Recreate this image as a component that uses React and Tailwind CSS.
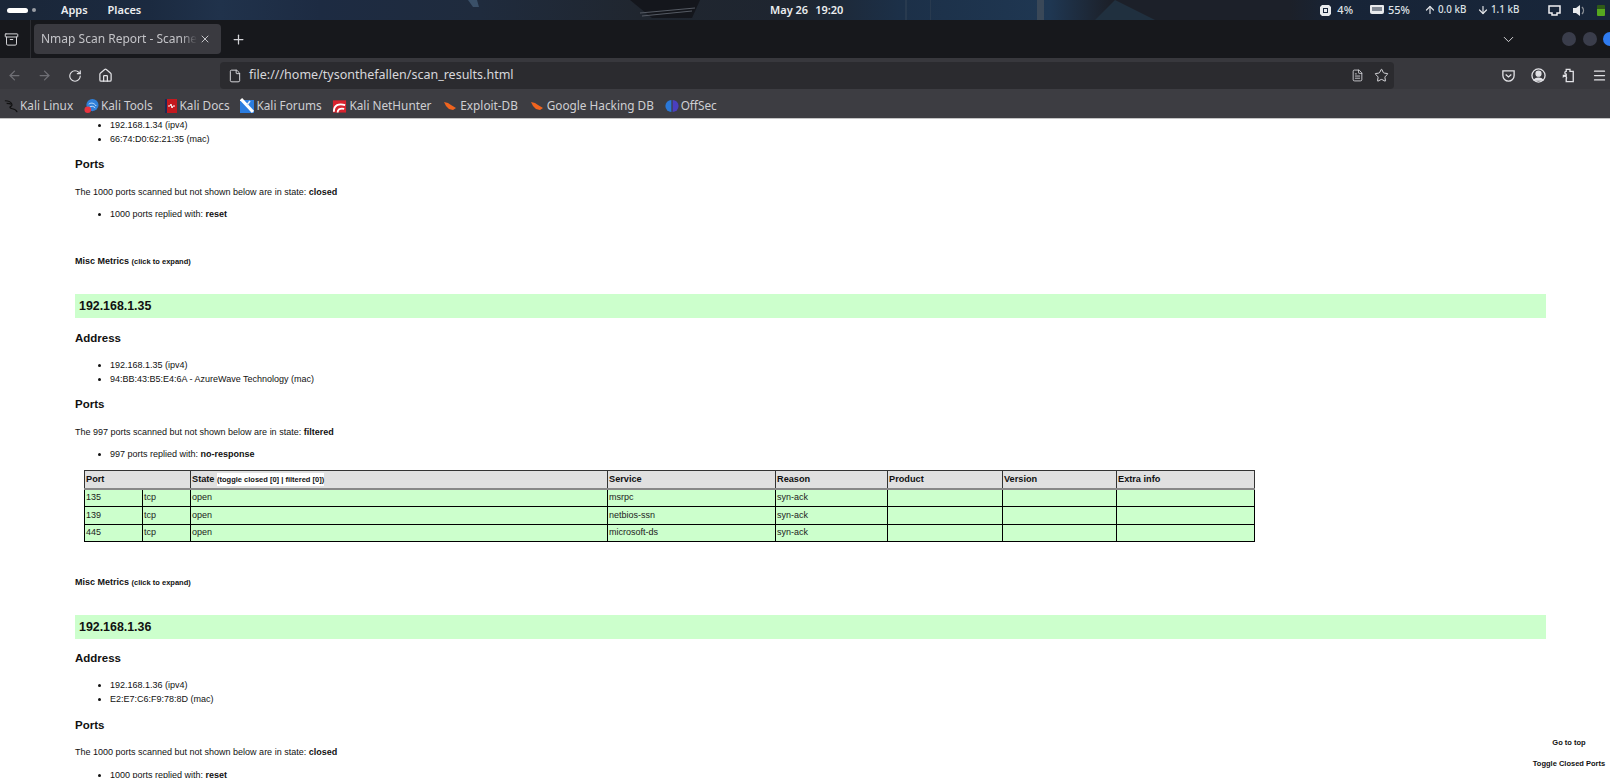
import { ArrowLeft, ArrowRight, RotateCw, Home, File, Star, ChevronDown, Plus, X, Menu, ArrowUp, ArrowDown, FileText, Archive } from "lucide-react";

const bookmarks = [
  { name: "Kali Linux", icon: "kali" },
  { name: "Kali Tools", icon: "tools" },
  { name: "Kali Docs", icon: "docs" },
  { name: "Kali Forums", icon: "forums" },
  { name: "Kali NetHunter", icon: "hunter" },
  { name: "Exploit-DB", icon: "exploit" },
  { name: "Google Hacking DB", icon: "exploit" },
  { name: "OffSec", icon: "offsec" },
];

function BookmarkIcon({ type }) {
  if (type === "kali")
    return (
      <svg width="14" height="16" viewBox="0 0 16 16" fill="none" stroke="#111" strokeWidth="1.4">
        <path d="M1 2c4 0 7 1 8 4s-3 2-2 4 6 0 8 5" />
        <path d="M3 5c2 0 4 0 5 1" />
      </svg>
    );
  if (type === "tools")
    return (
      <svg width="15" height="16" viewBox="0 0 16 16">
        <circle cx="9" cy="7" r="6.5" fill="#2f7fd8" />
        <path d="M5 6c3-2 6-1 8 2M6 9c2-1 4-1 6 1" stroke="#cfe6fb" fill="none" />
        <circle cx="4" cy="12" r="3.5" fill="#e8343f" />
      </svg>
    );
  if (type === "docs")
    return (
      <svg width="14" height="16" viewBox="0 0 14 16">
        <rect x="1" y="1" width="12" height="14" fill="#c4191f" />
        <rect x="1" y="1" width="2" height="14" fill="#1c2a55" />
        <path d="M4 8h2l1-2 1 4 1-2h2" stroke="#fff" fill="none" />
      </svg>
    );
  if (type === "forums")
    return (
      <svg width="14" height="16" viewBox="0 0 14 16">
        <rect x="0" y="2" width="14" height="13" fill="#2b7de0" />
        <path d="M1 1l12 13" stroke="#fff" strokeWidth="3" />
        <path d="M10 3L7 7" stroke="#dfeaf7" strokeWidth="1.5" />
      </svg>
    );
  if (type === "hunter")
    return (
      <svg width="15" height="16" viewBox="0 0 16 16">
        <rect x="1" y="2" width="14" height="13" fill="#d9232e" />
        <path d="M2 14c0-7 5-9 12-7M6 15c0-3 2-5 7-4" stroke="#fff" strokeWidth="2" fill="none" />
      </svg>
    );
  if (type === "exploit")
    return (
      <svg width="16" height="14" viewBox="0 0 14 14">
        <path d="M1 3l4 1 3 2 5 3-3 2-4-1-3-3z" fill="#f0641e" />
      </svg>
    );
  return (
    <svg width="14" height="14" viewBox="0 0 14 14">
      <path d="M6.4 1a6 6 0 0 0 0 12z" fill="#2a78d8" />
      <path d="M7.6 1a6 6 0 0 1 0 12z" fill="#4a3fc0" />
    </svg>
  );
}

function Addr({ lines }) {
  return (
    <ul className="list-disc pl-[35px] leading-[13.6px]">
      {lines.map((l) => (
        <li key={l}>{l}</li>
      ))}
    </ul>
  );
}

function Heading({ className, children }) {
  return <h3 className={`text-[11.5px] leading-[14px] font-bold ${className}`}>{children}</h3>;
}

function Misc({ className }) {
  return (
    <p className={`font-bold text-[9px] leading-[13px] ${className}`}>
      Misc Metrics <span className="text-[7.5px]">(click to expand)</span>
    </p>
  );
}

function HostBar({ ip, className }) {
  return (
    <h2 className={`h-[24px] bg-[#ccffcc] pl-[4px] text-[12.4px] font-bold leading-[24px] ${className}`}>{ip}</h2>
  );
}

const rows = [
  ["135", "tcp", "open", "msrpc", "syn-ack"],
  ["139", "tcp", "open", "netbios-ssn", "syn-ack"],
  ["445", "tcp", "open", "microsoft-ds", "syn-ack"],
];

function PortTable() {
  const th = "border border-[#333] pl-[1px] text-left font-bold align-middle";
  const td = "border border-black pl-[1px] text-left font-normal align-middle text-[#222]";
  return (
    <table className="ml-[9px] mt-[9px] w-[1170px] table-fixed border-collapse border border-[#444] text-[9px]">
      <colgroup>
        <col className="w-[58px]" />
        <col className="w-[48px]" />
        <col className="w-[417px]" />
        <col className="w-[168px]" />
        <col className="w-[112px]" />
        <col className="w-[115px]" />
        <col className="w-[114px]" />
        <col className="w-[138px]" />
      </colgroup>
      <thead>
        <tr className="h-[18px] border-b-2 border-b-[#888] bg-[#e0e0e0] text-[9.2px]">
          <th colSpan={2} className={th}>Port</th>
          <th className={th}>
            State{" "}
            <span className="bg-white py-[2px] text-[7.5px]">(toggle closed [0] | filtered [0])</span>
          </th>
          <th className={th}>Service</th>
          <th className={th}>Reason</th>
          <th className={th}>Product</th>
          <th className={th}>Version</th>
          <th className={th}>Extra info</th>
        </tr>
      </thead>
      <tbody>
        {rows.map((r) => (
          <tr key={r[0]} className="h-[17.6px] bg-[#ccffcc]">
            {r.map((c, i) => (
              <td key={i} className={td}>{c}</td>
            ))}
            <td className={td} />
            <td className={td} />
            <td className={td} />
          </tr>
        ))}
      </tbody>
    </table>
  );
}

export default function App() {
  return (
    <div className="relative flex h-[778px] w-[1610px] flex-col overflow-hidden bg-white">
      {/* top panel, wallpaper shows through */}
      <div className="relative flex h-[20px] shrink-0 items-center justify-between bg-[linear-gradient(to_right,#1a2638_0,#1b2a40_150px,#20324b_220px,#1d2b42_320px,#1f2b3d_480px,#20262f_640px,#1e2530_800px,#1c3048_900px,#1f3752_1050px,#1c2029_1110px,#1c2029_1290px,#172437_1340px,#18263a_1610px)] font-['Noto_Sans',sans-serif] text-[11px] font-semibold text-[#eceef0]">
        {/* wallpaper scraps */}
        <svg className="absolute left-0 top-0" width="1610" height="20" viewBox="0 0 1610 20" fill="none">
          <path d="M468 0h9l2 7h-6z" fill="#3a5068" />
          <path d="M630 0h70l-8 18h-40z" fill="#14161c" />
          <path d="M640 13l55-5M642 16l50-5" stroke="#555a63" />
          <path d="M1037 0h7v20h-7z" fill="#3a4858" />
          <path d="M905 0h2v20h-2zM930 0h1v20h-1z" fill="#283a4f" />
          <path d="M1115 0l40 20h-60z" fill="#20303f" />
        </svg>
        <div className="relative flex items-center">
          <span className="ml-[7px] h-[5px] w-[21px] rounded-full bg-white" />
          <span className="ml-[4px] h-[4px] w-[4px] rounded-full bg-[#9a9ea5]" />
          <span className="ml-[25px]">Apps</span>
          <span className="ml-[20px]">Places</span>
        </div>
        <div className="absolute left-[770px] top-0 flex h-[20px] items-center gap-[7px]">
          <span>May 26</span>
          <span>19:20</span>
        </div>
        <div className="relative flex items-center font-medium text-[#dfe2e6]">
          <svg width="13" height="13" viewBox="0 0 13 13" className="mr-[5px]" fill="#e8eaec">
            <path d="M3 1h7l2 2v7l-2 2H3l-2-2V3z" />
            <rect x="4" y="4" width="5" height="5" fill="#18263a" />
            <rect x="5" y="5" width="3" height="3" />
          </svg>
          <span>4%</span>
          <svg width="14" height="12" viewBox="0 0 14 12" className="ml-[17px] mr-[4px]" fill="#e8eaec">
            <path d="M1 1h12a1 1 0 0 1 1 1v6a2 2 0 0 1-2 2H2a2 2 0 0 1-2-2V2a1 1 0 0 1 1-1z" />
            <path d="M3 3v4M5 3v4M7 3v4M9 3v4M11 3v4" stroke="#18263a" />
          </svg>
          <span>55%</span>
          <ArrowUp size={12} strokeWidth={2.4} className="ml-[14px] mr-[2px]" />
          <span className="w-[28px] whitespace-nowrap text-[9.8px]">0.0 kB</span>
          <ArrowDown size={12} strokeWidth={2.4} className="ml-[11px] mr-[2px]" />
          <span className="w-[27px] whitespace-nowrap text-[9.8px]">1.1 kB</span>
          <svg width="13" height="11" viewBox="0 0 13 11" className="ml-[30px]" fill="none" stroke="#f0f0f2" strokeWidth="1.5">
            <path d="M1 1h11v7H9v2H4V8H1z" />
          </svg>
          <svg width="13" height="13" viewBox="0 0 13 13" className="ml-[11px]" fill="#e8eaec">
            <path d="M1 4h3l4-3v11L4 9H1z" />
            <path d="M10 3a5 5 0 0 1 0 7" stroke="#8a8f96" strokeWidth="1.4" fill="none" />
          </svg>
          <span className="ml-[12px] mr-[5px] h-[11px] w-[8px] rounded-[1px] bg-[linear-gradient(to_bottom,#2f5a18_0,#2f5a18_40%,#56a81f_40%)]" />
        </div>
      </div>

      {/* tab strip */}
      <div className="flex h-[38px] shrink-0 items-center bg-[#17181c] font-['Noto_Sans',sans-serif] text-[#d4d4d8]">
        <Archive size={15} strokeWidth={1.6} className="ml-[4px]" />
        <span className="ml-[11px] h-full w-px bg-[#2c2d32]" />
        <div className="ml-[3px] flex h-[30px] w-[187px] shrink-0 items-center rounded-[4px] bg-[#3a3a40] pl-[7px] text-[12px] text-[#c4c4c8]">
          <span className="w-[156px] overflow-hidden whitespace-nowrap [mask-image:linear-gradient(to_right,black_90%,transparent)]">Nmap Scan Report - Scanned</span>
          <X size={12} className="ml-[2px] shrink-0" />
        </div>
        <Plus size={15} className="ml-[10px]" />
        <ChevronDown size={17} strokeWidth={1.4} className="ml-auto mr-[45px]" />
        <span className="mr-[7px] h-[14px] w-[14px] rounded-full bg-[#3a3d4b]" />
        <span className="mr-[6px] h-[14px] w-[14px] rounded-full bg-[#3a3d4b]" />
        <span className="-mr-[7px] h-[14px] w-[14px] shrink-0 rounded-full bg-[#2f7bf0]" />
      </div>

      {/* nav bar */}
      <div className="flex h-[31px] shrink-0 items-end bg-[#38383d] font-['Noto_Sans',sans-serif] text-[#e2e2e6]">
        <div className="flex h-[27px] w-full items-center">
          <ArrowLeft size={15} className="ml-[7px] text-[#6f6f75]" />
          <ArrowRight size={15} className="ml-[15px] text-[#6f6f75]" />
          <RotateCw size={14} strokeWidth={2} className="ml-[16px]" />
          <Home size={15} className="ml-[16px]" />
          <div className="ml-[107px] flex h-[27px] w-[1174px] items-center rounded-[4px] bg-[#2b2b2f] pl-[8px] pr-[5px]">
            <File size={14} strokeWidth={1.6} />
            <span className="ml-[7px] text-[12.5px] text-[#d8d8dc]">file:///home/tysonthefallen/scan_results.html</span>
            <FileText size={13} strokeWidth={1.5} className="ml-auto" />
            <Star size={15} strokeWidth={1.5} className="ml-[10px]" />
          </div>
          <svg width="15" height="15" viewBox="0 0 16 16" fill="none" stroke="currentColor" strokeWidth="1.4" className="ml-[107px]">
            <path d="M2 3h12v5a6 6 0 0 1-12 0z" />
            <path d="M5 7l3 2.5L11 7" />
          </svg>
          <svg width="15" height="15" viewBox="0 0 16 16" className="ml-[15px]" fill="none" stroke="currentColor" strokeWidth="1.4">
            <circle cx="8" cy="8" r="7" />
            <circle cx="8" cy="6" r="2.6" fill="currentColor" />
            <path d="M3.5 13c1-3 8-3 9 0z" fill="currentColor" />
          </svg>
          <svg width="15" height="15" viewBox="0 0 16 16" className="ml-[16px]" fill="none" stroke="currentColor" strokeWidth="1.4">
            <path d="M1.5 8h3V6.5a1.5 1.5 0 0 1 0-3V1.5h4V3.5h3.5v11H4.5v-3a1.5 1.5 0 0 0-1-2.5 1.5 1.5 0 0 0-2 0z" />
          </svg>
          <Menu size={15} className="ml-[15px]" />
        </div>
      </div>

      {/* bookmarks */}
      <div className="flex h-[30px] shrink-0 items-center gap-[10.8px] border-b border-[#c4c4c4] bg-[#3d3d42] pl-[4px] pt-[4px] font-['Noto_Sans',sans-serif] text-[11.8px] text-[#cfcfd3]">
        {bookmarks.map((b) => (
          <div key={b.name} className="flex items-center gap-[2px]">
            <BookmarkIcon type={b.icon} />
            <span>{b.name}</span>
          </div>
        ))}
      </div>

      {/* page */}
      <div className="pl-[75px] pr-[64px] font-['Liberation_Sans',Arial,sans-serif] text-[9px] leading-[13px] text-[#111]">
        <Addr lines={["192.168.1.34 (ipv4)", "66:74:D0:62:21:35 (mac)"]} />
        <Heading className="mt-[11px]">Ports</Heading>
        <p className="mt-[15px]">
          The 1000 ports scanned but not shown below are in state: <b>closed</b>
        </p>
        <ul className="mt-[9px] list-disc pl-[35px]">
          <li>
            1000 ports replied with: <b>reset</b>
          </li>
        </ul>
        <Misc className="mt-[34px]" />
        <HostBar ip="192.168.1.35" className="mt-[26px]" />
        <Heading className="mt-[13px]">Address</Heading>
        <div className="mt-[14px]">
          <Addr lines={["192.168.1.35 (ipv4)", "94:BB:43:B5:E4:6A - AzureWave Technology (mac)"]} />
        </div>
        <Heading className="mt-[11px]">Ports</Heading>
        <p className="mt-[15px]">
          The 997 ports scanned but not shown below are in state: <b>filtered</b>
        </p>
        <ul className="mt-[9px] list-disc pl-[35px]">
          <li>
            997 ports replied with: <b>no-response</b>
          </li>
        </ul>
        <PortTable />
        <Misc className="mt-[34px]" />
        <HostBar ip="192.168.1.36" className="mt-[26px]" />
        <Heading className="mt-[12px]">Address</Heading>
        <div className="mt-[14px]">
          <Addr lines={["192.168.1.36 (ipv4)", "E2:E7:C6:F9:78:8D (mac)"]} />
        </div>
        <Heading className="mt-[12px]">Ports</Heading>
        <p className="mt-[14px]">
          The 1000 ports scanned but not shown below are in state: <b>closed</b>
        </p>
        <ul className="mt-[10px] list-disc pl-[35px]">
          <li>
            1000 ports replied with: <b>reset</b>
          </li>
        </ul>
      </div>

      {/* floating links */}
      <div className="absolute right-[4px] top-[736px] w-[74px] text-center font-['Liberation_Sans',Arial,sans-serif] text-[7.5px] font-bold leading-[13px] text-[#111]">
        <p>Go to top</p>
        <p className="mt-[8px]">Toggle Closed Ports</p>
      </div>
    </div>
  );
}
